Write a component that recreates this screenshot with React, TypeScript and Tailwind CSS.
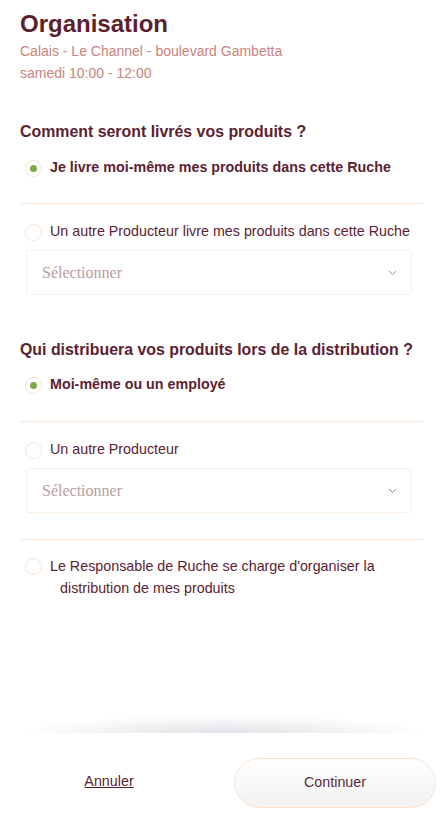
import React from "react";

const Radio = ({ checked }: { checked?: boolean }) => (
  <span className="flex h-[17px] w-[17px] shrink-0 items-center justify-center rounded-full border border-[#fde3cf] bg-white">
    {checked && <span className="h-[7px] w-[7px] rounded-full bg-[#7aab45]" />}
  </span>
);

const Select = () => (
  <div className="ml-[6px] mr-[12px] mt-[8px] flex h-[45px] items-center justify-between rounded-[3px] border border-[#fdeee3] pl-[15px] pr-[14px]">
    <span className="text-[16px] text-[#bb9ca2]" style={{ fontFamily: '"Liberation Serif", serif' }}>
      Sélectionner
    </span>
    <svg width="9" height="6" viewBox="0 0 9 6" fill="none">
      <path d="M1 1l3.5 3.5L8 1" stroke="#a08a90" strokeWidth="1" />
    </svg>
  </div>
);

export default function App() {
  return (
    <div
      className="flex h-[820px] w-[448px] flex-col bg-white text-[#5b2232]"
      style={{ fontFamily: '"Liberation Sans", Arial, sans-serif' }}
    >
      <div className="flex-1 pl-5 pr-6 pt-[9px]">
        <h1 className="text-[24px] font-bold leading-[30px] text-[#5b1f2f]">Organisation</h1>
        <p className="mt-[1px] text-[14px] leading-[22px] text-[#c8847d]">Calais - Le Channel - boulevard Gambetta</p>
        <p className="text-[14px] leading-[22px] text-[#c8847d]">samedi 10:00 - 12:00</p>

        <h2 className="mt-[38px] text-[15.9px] font-bold leading-[20px]">Comment seront livrés vos produits ?</h2>
        <div className="mt-[16px] flex h-[20px] items-center gap-[8px] pl-[5px]">
          <Radio checked />
          <span className="text-[14.3px] font-bold">Je livre moi-même mes produits dans cette Ruche</span>
        </div>
        <div className="mt-[25px] h-px bg-[#fde6d4]" />
        <div className="mt-[18px] flex h-[20px] items-center gap-[8px] pl-[5px]">
          <Radio />
          <span className="text-[14.3px]">Un autre Producteur livre mes produits dans cette Ruche</span>
        </div>
        <Select />

        <h2 className="mt-[45px] text-[15.9px] font-bold leading-[20px]">Qui distribuera vos produits lors de la distribution ?</h2>
        <div className="mt-[15px] flex h-[20px] items-center gap-[8px] pl-[5px]">
          <Radio checked />
          <span className="text-[14.3px] font-bold">Moi-même ou un employé</span>
        </div>
        <div className="mt-[26px] h-px bg-[#fde6d4]" />
        <div className="mt-[18px] flex h-[20px] items-center gap-[8px] pl-[5px]">
          <Radio />
          <span className="text-[14.3px]">Un autre Producteur</span>
        </div>
        <Select />
        <div className="mt-[26px] h-px bg-[#fde6d4]" />
        <div className="mt-[17px] flex items-start gap-[8px] pl-[5px]">
          <span className="mt-[1px]">
            <Radio />
          </span>
          <span className="pl-[10px] -indent-[10px] text-[14.3px] leading-[22px] -mt-[2px]">
            Le Responsable de Ruche se charge d'organiser la distribution de mes produits
          </span>
        </div>
      </div>

      <div className="mx-5 h-[18px] bg-[radial-gradient(ellipse_at_bottom,rgba(150,150,170,0.28),rgba(255,255,255,0)_70%)]" />
      <div className="flex h-[87px] items-start gap-4 pr-3 pt-[25px]">
        <div className="flex h-[47px] flex-1 items-center justify-center">
          <a className="text-[14.3px] text-[#5b2232] underline">Annuler</a>
        </div>
        <button className="flex h-[50px] w-[202px] items-center justify-center rounded-full border border-[#fde3cf] bg-gradient-to-b from-white to-[#f2f2f2] text-[14.3px] text-[#5b2a3c]">
          Continuer
        </button>
      </div>
    </div>
  );
}
